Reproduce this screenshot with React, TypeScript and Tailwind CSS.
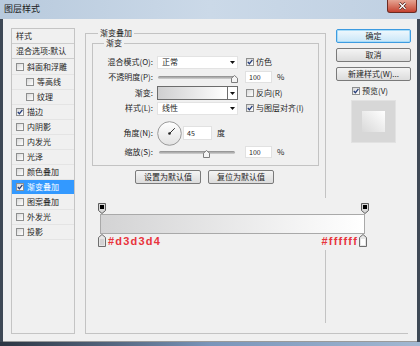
import type { ReactNode } from "react";

type Item = { label: string; level: number; on?: boolean; active?: boolean };

const items: Item[] = [
  { label: "斜面和浮雕", level: 0 },
  { label: "等高线", level: 1 },
  { label: "纹理", level: 1 },
  { label: "描边", level: 0, on: true },
  { label: "内阴影", level: 0 },
  { label: "内发光", level: 0 },
  { label: "光泽", level: 0 },
  { label: "颜色叠加", level: 0 },
  { label: "渐变叠加", level: 0, on: true, active: true },
  { label: "图案叠加", level: 0 },
  { label: "外发光", level: 0 },
  { label: "投影", level: 0 },
];

function Check({ on }: { on?: boolean }) {
  return (
    <span className="flex h-[8px] w-[8px] shrink-0 items-center justify-center border border-[#8e8f8f] bg-gradient-to-br from-[#d9d9d9] to-white">
      {on && (
        <svg width="6" height="6" viewBox="0 0 6 6">
          <path d="M0.8 3 L2.4 4.8 L5.4 0.8" stroke="#233b7a" strokeWidth="1.3" fill="none" />
        </svg>
      )}
    </span>
  );
}

function Arrow() {
  return (
    <svg width="5" height="3" viewBox="0 0 5 3" className="shrink-0">
      <path d="M0 0H5L2.5 3Z" fill="#111" />
    </svg>
  );
}

function Btn({ children, primary, w }: { children: ReactNode; primary?: boolean; w: string }) {
  return (
    <div
      className={
        primary
          ? `flex h-[14px] ${w} items-center justify-center rounded-[2px] border border-[#3d9be0] bg-gradient-to-b from-[#f0f8fd] to-[#c9e6f8] shadow-[inset_0_0_0_1px_#a9dcf8]`
          : `flex h-[14px] ${w} items-center justify-center rounded-[2px] border border-[#7a7a7a] bg-gradient-to-b from-[#f4f4f4] to-[#dcdcdc]`
      }
    >
      {children}
    </div>
  );
}

function Thumb() {
  return (
    <svg width="7" height="8" viewBox="0 0 7 8">
      <path d="M0.5 3.2 L3.5 0.5 L6.5 3.2 V7.5 H0.5 Z" fill="#f4f4f4" stroke="#7d7d7d" />
    </svg>
  );
}

function Slider({ w, ml, at }: { w: string; ml: string; at: number }) {
  return (
    <div className={`relative flex h-[12px] ${w} ${ml} items-center`}>
      <div className="h-[3px] w-full rounded-full bg-gradient-to-b from-[#8c8c8c] to-[#d4d4d4]" />
      <div className="absolute top-[4px]" style={{ left: at }}>
        <Thumb />
      </div>
    </div>
  );
}

function Field({ value, w, h }: { value: string; w: string; h: string }) {
  return (
    <div className={`flex ${h} ${w} items-center border border-[#e1e1e1] bg-white pl-[3px] text-[7px]`}>
      {value}
    </div>
  );
}

function Label({ children }: { children: ReactNode }) {
  return <span className="mr-[4px] w-[60px] shrink-0 text-right">{children}</span>;
}

function SelectBox({ value }: { value: string }) {
  return (
    <div className="flex h-[13px] w-[81px] items-center justify-between border border-[#e3e3e3] bg-white pl-[4px] pr-[2px]">
      <span>{value}</span>
      <Arrow />
    </div>
  );
}

function Opt({ on, children }: { on?: boolean; children: ReactNode }) {
  return (
    <div className="ml-[8px] flex items-center">
      <Check on={on} />
      <span className="ml-[2px]">{children}</span>
    </div>
  );
}

function StylePanel() {
  return (
    <div className="ml-[8px] mt-[9px] h-[306px] w-[64px] shrink-0 border border-[#c4c4c4]">
      <div className="flex h-[15px] items-center border-b border-[#cdcdcd] pl-[4px]">样式</div>
      <div className="flex h-[15px] items-center border-b border-[#cdcdcd] pl-[4px]">混合选项:默认</div>
      <div className="pt-[1px]">
        {items.map((it) => (
          <div
            key={it.label}
            className={`flex h-[15px] items-center border-b ${
              it.active ? "border-[#f0f0f0] bg-[#3399ff] text-white" : "border-[#e4e4e4]"
            } ${it.level ? "pl-[14px]" : "pl-[4px]"}`}
          >
            <Check on={it.on} />
            <span className="ml-[3px]">{it.label}</span>
          </div>
        ))}
      </div>
    </div>
  );
}

function Settings() {
  return (
    <fieldset className="h-[170px] w-[240px] shrink-0 border-r border-t border-[#c3c3c3]">
      <legend className="ml-[12px] h-[10px] px-[2px] leading-[10px]">渐变叠加</legend>
      <fieldset className="ml-[6px] h-[128px] w-[227px] border border-[#c3c3c3]">
        <legend className="ml-[11px] h-[10px] px-[2px] leading-[10px]">渐变</legend>
        <div className="flex flex-col pt-[7px]">
          <div className="flex h-[14px] items-center">
            <Label>混合模式(O):</Label>
            <SelectBox value="正常" />
            <Opt on>仿色</Opt>
          </div>
          <div className="mt-[1px] flex h-[14px] items-center">
            <Label>不透明度(P):</Label>
            <Slider w="w-[78px]" ml="ml-[1px]" at={73} />
            <div className="ml-[9px]">
              <Field value="100" w="w-[27px]" h="h-[12px]" />
            </div>
            <span className="ml-[5px]">%</span>
          </div>
          <div className="mt-[2px] flex h-[14px] items-center">
            <Label>渐变:</Label>
            <div className="flex h-[14px] w-[81px] border border-[#6c6c6c]">
              <div className="flex-1 bg-gradient-to-r from-[#cfcfd0] to-white" />
              <div className="flex w-[10px] items-center justify-center border-l border-[#6c6c6c] bg-white">
                <Arrow />
              </div>
            </div>
            <Opt>反向(R)</Opt>
          </div>
          <div className="mt-[1px] flex h-[14px] items-center">
            <Label>样式(L):</Label>
            <SelectBox value="线性" />
            <Opt on>与图层对齐(I)</Opt>
          </div>
          <div className="mt-[5px] flex h-[26px] items-center">
            <Label>角度(N):</Label>
            <svg width="25" height="25" viewBox="0 0 25 25" className="shrink-0">
              <defs>
                <linearGradient id="dial" x1="0" y1="0" x2="0" y2="1">
                  <stop offset="0" stopColor="#ffffff" />
                  <stop offset="1" stopColor="#e2e2e2" />
                </linearGradient>
              </defs>
              <circle cx="12.5" cy="12.5" r="11.8" fill="url(#dial)" stroke="#9a9a9a" />
              <line x1="12.5" y1="12.5" x2="17.8" y2="7.2" stroke="#333" strokeWidth="1" />
              <circle cx="12.5" cy="12.5" r="1.3" fill="#222" />
            </svg>
            <div className="ml-[1px]">
              <Field value="45" w="w-[29px]" h="h-[14px]" />
            </div>
            <span className="ml-[5px]">度</span>
          </div>
          <div className="flex h-[12px] items-center">
            <Label>缩放(S):</Label>
            <Slider w="w-[76px]" ml="ml-[2px]" at={44} />
            <div className="ml-[10px]">
              <Field value="100" w="w-[27px]" h="h-[12px]" />
            </div>
            <span className="ml-[5px]">%</span>
          </div>
        </div>
      </fieldset>
      <div className="ml-[49px] mt-[4px] flex gap-[7px]">
        <Btn w="w-[66px]">设置为默认值</Btn>
        <Btn w="w-[66px]">复位为默认值</Btn>
      </div>
    </fieldset>
  );
}

function RightColumn() {
  return (
    <div className="ml-[10px] mt-[1px] flex w-[75px] shrink-0 flex-col">
      <Btn primary w="w-[75px]">确定</Btn>
      <div className="mt-[5px]">
        <Btn w="w-[75px]">取消</Btn>
      </div>
      <div className="mt-[5px]">
        <Btn w="w-[75px]">新建样式(W)...</Btn>
      </div>
      <div className="ml-[16px] mt-[5px] flex h-[9px] items-center">
        <Check on />
        <span className="ml-[2px]">预览(V)</span>
      </div>
      <div className="ml-[15px] mt-[5px] flex h-[43px] w-[45px] items-center justify-center border border-[#e2e2e2] bg-[#d7d7d7]">
        <div className="h-[21px] w-[23px] bg-gradient-to-tr from-[#d9d9d9] to-white" />
      </div>
    </div>
  );
}

function TopStop() {
  return (
    <svg width="8" height="11" viewBox="0 0 8 11">
      <path d="M0.5 0.5 H7.5 V7.5 L4 10.5 L0.5 7.5 Z" fill="#d8d8d8" stroke="#5d5d5d" />
      <rect x="2" y="2" width="4" height="4" fill="#000" />
    </svg>
  );
}

function BottomStop({ fill }: { fill: string }) {
  return (
    <svg width="8" height="13" viewBox="0 0 8 13">
      <path d="M0.5 3.5 L4 0.5 L7.5 3.5 V12.5 H0.5 Z" fill="#e6e6e6" stroke="#6e6e6e" />
      <rect x="2" y="5" width="4" height="6" fill={fill} />
    </svg>
  );
}

function GradientEditor() {
  return (
    <div className="ml-[12px] mt-[5px] flex w-[271px] flex-col">
      <div className="flex h-[11px] justify-between">
        <TopStop />
        <TopStop />
      </div>
      <div className="ml-[2px] h-[20px] w-[265px] border border-[#a9a9a9] bg-gradient-to-r from-[#d3d3d4] to-white" />
      <div className="flex h-[13px] items-start">
        <BottomStop fill="#d3d3d4" />
        <span className="ml-[2px] mt-[2px] font-['Liberation_Sans',sans-serif] text-[11px] font-bold leading-none tracking-[1.2px] text-[#e8343c]">
          #d3d3d4
        </span>
        <span className="ml-auto mt-[2px] font-['Liberation_Sans',sans-serif] text-[11px] font-bold leading-none tracking-[1.2px] text-[#e8343c]">
          #ffffff
        </span>
        <div className="ml-[1px] mr-[2px]">
          <BottomStop fill="#ffffff" />
        </div>
      </div>
    </div>
  );
}

function Main() {
  return (
    <div className="ml-[10px] mt-[14px] flex h-[301px] w-[323px] shrink-0 flex-col border-b border-l border-[#c3c3c3]">
      <div className="-mt-[5px] flex items-start">
        <Settings />
        <RightColumn />
      </div>
      <GradientEditor />
      <div className="ml-[239px] mt-[3px] h-[73px] w-px bg-[#c3c3c3]" />
    </div>
  );
}

function TitleBar() {
  return (
    <div className="flex h-[19px] shrink-0 items-start justify-between bg-gradient-to-r from-[#b8cadd] via-[#cbd9e8] to-[#bfd0e2]">
      <span className="ml-[4px] mt-[4px] text-[9px] leading-[9px] text-[#1a1a1a]">图层样式</span>
      <div className="mr-[3px] flex h-[13px] w-[30px] items-center justify-center rounded-b-[3px] border border-t-0 border-[#6b2b22] bg-gradient-to-b from-[#e5a493] to-[#c4402f]">
        <svg width="9" height="8" viewBox="0 0 9 8">
          <path d="M1.5 1 L7.5 7 M7.5 1 L1.5 7" stroke="#4a1a14" strokeWidth="2.6" />
          <path d="M1.5 1 L7.5 7 M7.5 1 L1.5 7" stroke="#ffffff" strokeWidth="1.4" />
        </svg>
      </div>
    </div>
  );
}

export default function App() {
  return (
    <div className="flex h-[346px] w-[420px] flex-col overflow-hidden bg-[#3e4855] font-['Noto_Sans_CJK_SC',sans-serif] text-[8px] leading-none text-[#1e1e1e]">
      <TitleBar />
      <div className="mx-[3px] flex flex-1 items-start border-b border-[#9a9a9a] bg-[#f0f0f0]">
        <StylePanel />
        <Main />
      </div>
      <div className="h-[4px] shrink-0 bg-gradient-to-r from-[#2c3542] via-[#7a95ba] to-[#a2b8d2]" />
    </div>
  );
}
